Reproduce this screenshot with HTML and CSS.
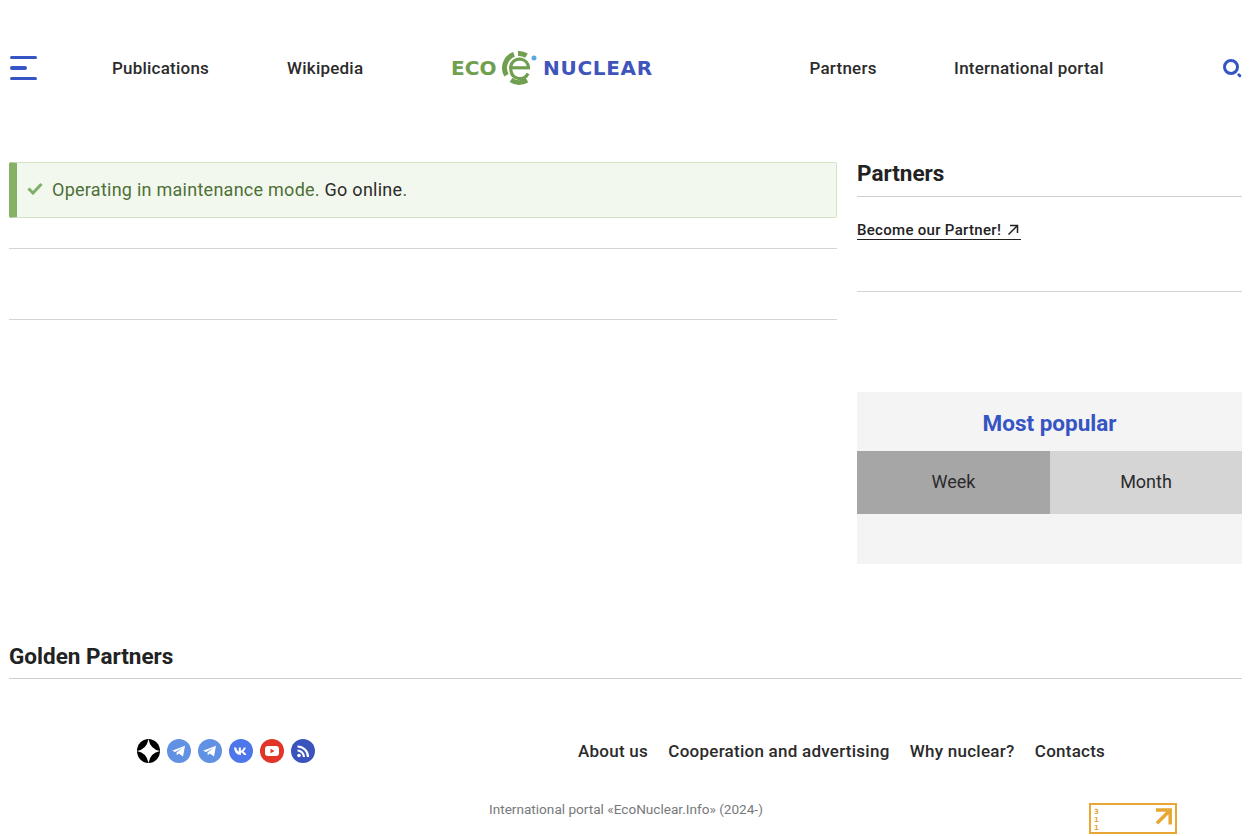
FILE: index.html
```html
<!DOCTYPE html>
<html lang="en">
<head>
<meta charset="utf-8">
<title>EcoNuclear</title>
<link rel="stylesheet" href="styles.css">
</head>
<body>
<header class="site-header">
  <button class="burger" aria-label="Menu"><span class="b-long"></span><span class="b-short"></span><span class="b-long"></span></button>
  <nav class="nav nav-left"><a>Publications</a><a>Wikipedia</a></nav>
  <a class="logo">
    <span class="logo-eco">ECO</span>
    <svg class="logo-mark" width="36" height="36" viewBox="0 0 36 36" aria-hidden="true">
      <g fill="none" stroke="#6f9f4f" stroke-width="5">
        <path d="M13 4.400 A14.500 14.500 0 0 0 5.400 25.200"/>
        <path d="M17 3.500 A14.500 14.500 0 0 1 25.500 5.600"/>
        <path d="M26 30.100 A14.500 14.500 0 0 1 10 30"/>
      </g>
      <g fill="none" stroke="#6f9f4f" stroke-width="3.200">
        <path d="M10 17.800 H29"/>
        <path d="M27.500 17.500 A9 9 0 0 0 10.500 14 A9 9 0 0 0 10 21 A9 9 0 0 0 27 23.500"/>
      </g>
      <circle cx="33" cy="8" r="2.500" fill="#5aa9e6"/>
    </svg>
    <span class="logo-nuclear">NUCLEAR</span>
  </a>
  <nav class="nav nav-right"><a>Partners</a><a>International portal</a></nav>
  <button class="search" aria-label="Search">
    <svg width="20" height="20" viewBox="0 0 20 20" aria-hidden="true"><circle cx="8" cy="9" r="6.500" fill="none" stroke="#3655c4" stroke-width="3"/><path d="M15.800 16.800 L16.800 17.800" stroke="#3655c4" stroke-width="3" stroke-linecap="round"/></svg>
  </button>
</header>

<main class="main">
  <section class="content">
    <div class="alert">
      <svg class="check" width="16" height="13" viewBox="0 0 16 13" aria-hidden="true"><path d="M1.500 6.500 L6 11 L14.500 2" fill="none" stroke="#7fb069" stroke-width="3"/></svg>
      <p>Operating in maintenance mode. <a>Go online</a>.</p>
    </div>
    <div class="empty-row"></div>
  </section>
  <aside class="side">
    <h2 class="section-title">Partners</h2>
    <div class="partner-box">
      <a class="become">Become our Partner!
        <svg width="12" height="12" viewBox="0 0 12 12" aria-hidden="true"><path d="M1.500 10.500 L10.500 1.500 M3 1.500 H10.500 V9" fill="none" stroke="#222" stroke-width="1.500"/></svg>
      </a>
    </div>
    <div class="popular">
      <h3>Most popular</h3>
      <div class="tabs"><div class="tab tab-active">Week</div><div class="tab">Month</div></div>
      <div class="popular-body"></div>
    </div>
  </aside>
</main>

<section class="golden">
  <h2 class="section-title">Golden Partners</h2>
</section>

<footer class="footer">
  <div class="footer-row">
    <div class="socials">
      <span class="soc soc-zen"><svg width="23" height="24" viewBox="0 0 24 24" preserveAspectRatio="none" aria-hidden="true"><path class="glyph" d="M12 0 Q13.800 10.200 24 12 Q13.800 13.800 12 24 Q10.200 13.800 0 12 Q10.200 10.200 12 0Z"/></svg></span>
      <span class="soc soc-tg"><svg width="24" height="24" viewBox="0 0 24 24" aria-hidden="true"><path class="glyph" d="M5 11.800 L18 6.800 L16 17.500 L11.800 14.500 L9.800 16.300 L9.500 13.500 L15.500 8.800 L8.200 13 Z"/></svg></span>
      <span class="soc soc-tg"><svg width="24" height="24" viewBox="0 0 24 24" aria-hidden="true"><path class="glyph" d="M5 11.800 L18 6.800 L16 17.500 L11.800 14.500 L9.800 16.300 L9.500 13.500 L15.500 8.800 L8.200 13 Z"/></svg></span>
      <span class="soc soc-vk"><svg width="24" height="24" viewBox="0 0 24 24" aria-hidden="true"><path class="glyph" d="M5 8.500 H7.300 C7.500 10.500 8.500 12 9.800 12.400 V8.500 H11.900 V11.800 C13 11.600 14.200 10.300 14.700 8.500 H16.800 C16.400 10.500 15.300 11.800 14.300 12.500 C15.400 13 16.700 14.100 17.400 16 H15 C14.500 14.600 13.300 13.600 11.900 13.400 V16 H11.500 C8 16 5.300 13 5 8.500 Z"/></svg></span>
      <span class="soc soc-yt"><svg width="24" height="24" viewBox="0 0 24 24" aria-hidden="true"><rect class="glyph" x="5" y="7" width="14" height="10" rx="3"/><path d="M10.500 9.700 L14.500 12 L10.500 14.300 Z" fill="#e1352a"/></svg></span>
      <span class="soc soc-rss"><svg width="24" height="24" viewBox="0 0 24 24" aria-hidden="true"><circle class="glyph" cx="8" cy="16.500" r="1.800"/><path d="M6.500 11.500 A6.500 6.500 0 0 1 13 18 M6.500 7.500 A10.500 10.500 0 0 1 17 18" fill="none" stroke="#fff" stroke-width="2.200"/></svg></span>
    </div>
    <nav class="footer-nav"><a>About us</a><a>Cooperation and advertising</a><a>Why nuclear?</a><a>Contacts</a></nav>
  </div>
  <div class="footer-bottom">
    <p class="copyright">International portal «EcoNuclear.Info» (2024-)</p>
    <div class="counter">
      <div class="counter-nums"><span>3</span><span>1</span><span>1</span></div>
      <svg class="counter-arrow" width="18" height="18" viewBox="0 0 18 18" aria-hidden="true"><path d="M2 2 H16.200 V16.500 M16 2.200 L3 15.200" fill="none" stroke="#e8a735" stroke-width="3.500"/></svg>
    </div>
  </div>
</footer>
</body>
</html>
```
FILE: styles.css
```css
* { box-sizing: border-box; }
html, body { margin: 0; padding: 0; }
body {
  width: 1256px;
  height: 836px;
  overflow: hidden;
  background: #fff;
  color: #222;
  font-family: Roboto, "Liberation Sans", sans-serif;
}
p, h2, h3 { margin: 0; }
button { border: 0; background: none; padding: 0; }

.site-header {
  display: flex;
  align-items: center;
  height: 136px;
  padding-left: 10px;
}
.burger {
  display: flex;
  flex-direction: column;
  gap: 6.800px;
  width: 27px;
  margin-right: 75px;
}
.burger span { display: block; height: 3.500px; border-radius: 2px; background: #3655c4; }
.burger .b-long { width: 27px; }
.burger .b-short { width: 17px; }
.nav { display: flex; font-size: 17px; font-weight: 500; letter-spacing: .22px; color: #2b2b2b; }
.nav-left { gap: 78px; width: 339px; }
.nav-right { gap: 77.500px; width: 413.500px; }
.logo {
  display: flex;
  align-items: center;
  width: 358.500px;
  font-family: "DejaVu Sans", sans-serif;
  font-weight: 700;
  font-size: 20px;
  line-height: 1;
}
.logo-eco { color: #6f9f4f; width: 50px; letter-spacing: .1px; }
.logo-mark { margin-left: 0; margin-right: 6px; flex: none; }
.logo-nuclear { color: #3f55bb; letter-spacing: .7px; }
.search { display: flex; }

.main {
  display: grid;
  grid-template-columns: 828px 385px;
  gap: 20px;
  padding-top: 26px;
  padding-left: 9px;
}
.alert {
  display: flex;
  align-items: center;
  gap: 9px;
  height: 56px;
  padding-left: 10px;
  padding-bottom: 1px;
  background: #f3f8ee;
  border: 1px solid #d3e3c5;
  border-left: 8px solid #86b066;
  border-radius: 2px;
  font-size: 18px;
  letter-spacing: .26px;
  color: #4d7038;
}
.alert a { color: #2b2b2b; }
.check { margin-top: -3px; }
.empty-row {
  height: 72px;
  margin-top: 30px;
  border-top: 1px solid #d4d4d4;
  border-bottom: 1px solid #d4d4d4;
}
.section-title {
  font-size: 22.500px;
  font-weight: 700;
  line-height: 26px;
  padding-bottom: 9px;
  border-bottom: 1px solid #cfcfcf;
}
.side .section-title { height: 35px; line-height: 23px; }
.partner-box {
  height: 95px;
  padding-top: 23px;
  border-bottom: 1px solid #d4d4d4;
}
.become {
  display: inline-flex;
  align-items: center;
  gap: 6px;
  height: 19px;
  padding-right: 2px;
  font-size: 15px;
  font-weight: 500;
  letter-spacing: .3px;
  border-bottom: 1px solid #222;
}
.popular { margin-top: 100px; background: #f4f4f4; height: 172px; }
.popular h3 {
  height: 59px;
  font-size: 22.500px;
  font-weight: 700;
  line-height: 63px;
  text-align: center;
  color: #3655c4;
}
.tabs { display: grid; grid-template-columns: 193px 192px; height: 63px; }
.tab {
  display: flex;
  align-items: center;
  justify-content: center;
  padding-bottom: 2px;
  background: #d5d5d5;
  font-size: 18px;
  color: #2b2b2b;
}
.tab-active { background: #a6a6a7; }

.golden { padding: 79px 14px 0 9px; }
.footer-row {
  display: flex;
  align-items: center;
  height: 24px;
  margin-top: 60px;
  padding-left: 136px;
}
.socials { display: flex; gap: 7px; width: 442px; }
.soc { display: block; width: 24px; height: 24px; border-radius: 50%; }
.soc svg { display: block; }
.glyph { fill: #fff; }
.soc-zen { background: #000; width: 23px; margin-left: 1px; }
.soc-tg { background: #6191e3; }
.soc-vk { background: #4d76ea; }
.soc-yt { background: #e1352a; }
.soc-rss { background: #3a53bd; }
.footer-nav { display: flex; gap: 20.300px; font-size: 17px; font-weight: 500; letter-spacing: .25px; color: #2b2b2b; }
.footer-bottom {
  display: flex;
  align-items: flex-start;
  margin-top: 40px;
}
.copyright {
  width: 1089px;
  padding-left: 489px;
  font-size: 13.600px;
  line-height: 12px;
  color: #77797c;
}
.counter {
  display: flex;
  justify-content: space-between;
  align-items: center;
  width: 88px;
  height: 31px;
  padding: 0 3px;
  border: 2px solid #e8a735;
}
.counter-nums {
  display: flex;
  flex-direction: column;
  font-family: "DejaVu Sans", sans-serif;
  font-weight: 700;
  font-size: 7px;
  line-height: 8px;
  margin-top: 2px;
  color: #e8a735;
}
.counter-arrow { margin-bottom: 4px; }
```
